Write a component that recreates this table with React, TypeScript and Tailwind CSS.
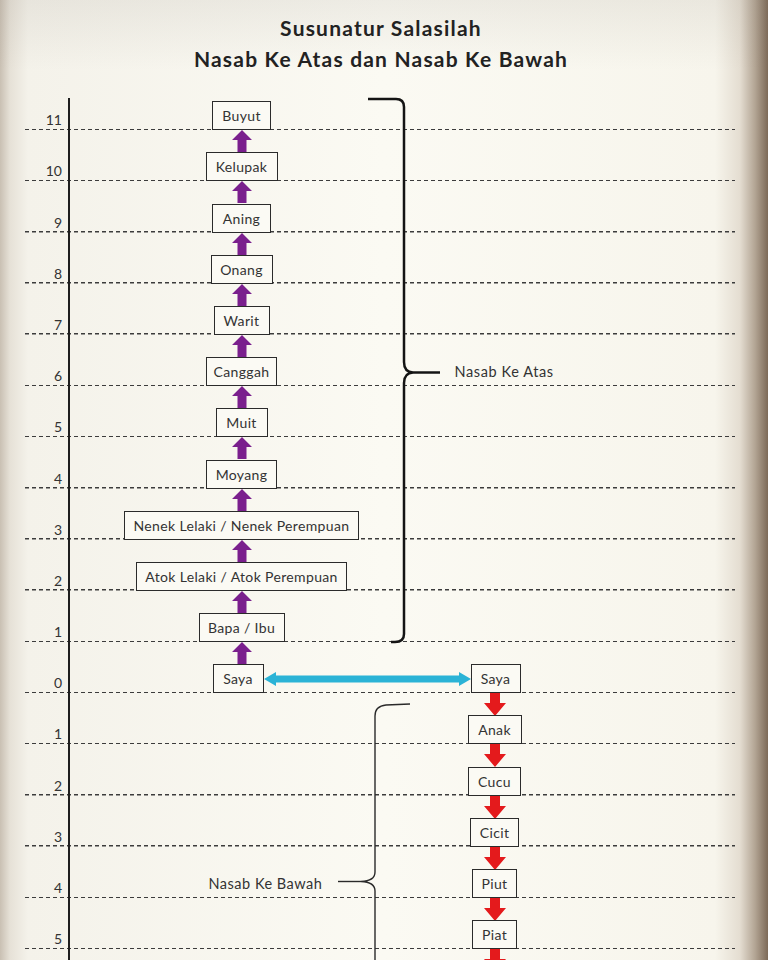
import React from 'react';

type Box = { label: string; w: string };

interface Row {
    n: string;
    left?: Box;
    right?: Box;
    up?: boolean;
    down?: boolean;
    noteRight?: string;
    noteLeft?: string;
    first?: boolean;
    self?: boolean;
}

const rows: Row[] = [
    { n: '11', left: { label: 'Buyut', w: 'w-[59px]' }, first: true },
    { n: '10', left: { label: 'Kelupak', w: 'w-[72px]' }, up: true },
    { n: '9', left: { label: 'Aning', w: 'w-[59px]' }, up: true },
    { n: '8', left: { label: 'Onang', w: 'w-[62px]' }, up: true },
    { n: '7', left: { label: 'Warit', w: 'w-[56px]' }, up: true },
    { n: '6', left: { label: 'Canggah', w: 'w-[71px]' }, up: true, noteRight: 'Nasab Ke Atas' },
    { n: '5', left: { label: 'Muit', w: 'w-[52px]' }, up: true },
    { n: '4', left: { label: 'Moyang', w: 'w-[71px]' }, up: true },
    { n: '3', left: { label: 'Nenek Lelaki / Nenek Perempuan', w: 'w-[235px]' }, up: true },
    { n: '2', left: { label: 'Atok Lelaki / Atok Perempuan', w: 'w-[211px]' }, up: true },
    { n: '1', left: { label: 'Bapa / Ibu', w: 'w-[86px]' }, up: true },
    { n: '0', up: true, self: true },
    { n: '1', right: { label: 'Anak', w: 'w-[54px]' }, down: true },
    { n: '2', right: { label: 'Cucu', w: 'w-[53px]' }, down: true },
    { n: '3', right: { label: 'Cicit', w: 'w-[49px]' }, down: true },
    { n: '4', right: { label: 'Piut', w: 'w-[45px]' }, down: true, noteLeft: 'Nasab Ke Bawah' },
    { n: '5', right: { label: 'Piat', w: 'w-[45px]' }, down: true },
];

function UpArrow() {
    return (
        <svg width="22" height="22" viewBox="0 0 22 22">
            <polygon points="11,0 21,10 15.5,10 15.5,22 6.5,22 6.5,10 1,10" fill="#7a1f8d" />
        </svg>
    );
}

function DownArrow() {
    return (
        <svg width="24" height="23" viewBox="0 0 24 23">
            <polygon points="7,0 17,0 17,10 23,10 12,23 1,10 7,10" fill="#e41a1c" />
        </svg>
    );
}

function BothArrow() {
    return (
        <svg width="207" height="16" viewBox="0 0 207 16">
            <polygon
                points="0,8 12,1 12,4.5 195,4.5 195,1 207,8 195,15 195,11.5 12,11.5 12,15"
                fill="#2bb3d6"
            />
        </svg>
    );
}

function NameBox({ box }: { box: Box }) {
    return (
        <div
            className={`${box.w} h-[29px] border-[1.5px] border-[#2b2b2b] bg-[#fbfaf4] flex items-center justify-center text-[14px] tracking-[0.35px] text-[#333] whitespace-nowrap`}
        >
            {box.label}
        </div>
    );
}

function ChartRow({ row }: { row: Row }) {
    return (
        <div className="ml-[25px] w-[710px] h-[51.2px] flex bg-[repeating-linear-gradient(90deg,#3c3c3c_0px,#3c3c3c_4px,transparent_4px,transparent_7px)] bg-[length:100%_1.5px] bg-no-repeat bg-bottom">
            {/* level number */}
            <div className="w-[43px] flex items-end justify-end pr-[6px] pb-[3px] text-[14px] leading-none text-[#333]">
                {row.n}
            </div>

            {/* axis */}
            <div className={`w-[1.5px] bg-[#1e1e1e] ${row.first ? 'mt-[19px]' : ''}`} />

            <div className="flex-1 flex flex-col">
                <div className="h-[22.2px] grid grid-cols-[344px_162px_1fr]">
                    <div className="flex justify-center">{row.up && <UpArrow />}</div>
                    <div className="flex justify-center">{row.down && <DownArrow />}</div>
                </div>

                {row.self ? (
                    <div className="h-[29px] flex items-center">
                        <div className="ml-[143px]">
                            <NameBox box={{ label: 'Saya', w: 'w-[51px]' }} />
                        </div>
                        <BothArrow />
                        <NameBox box={{ label: 'Saya', w: 'w-[50px]' }} />
                    </div>
                ) : (
                    <div className="h-[29px] grid grid-cols-[344px_162px_1fr]">
                        <div className="flex items-center justify-center">
                            {row.left && <NameBox box={row.left} />}
                            {row.noteLeft && (
                                <span className="mr-auto ml-[139px] text-[14.5px] tracking-[0.5px] text-[#333] whitespace-nowrap">
                                    {row.noteLeft}
                                </span>
                            )}
                        </div>
                        <div className="flex items-center justify-center">
                            {row.right && <NameBox box={row.right} />}
                            {row.noteRight && (
                                <span className="mr-auto ml-[41px] text-[14.5px] tracking-[0.6px] text-[#333] whitespace-nowrap">
                                    {row.noteRight}
                                </span>
                            )}
                        </div>
                    </div>
                )}
            </div>
        </div>
    );
}

export default function App() {
    return (
        <div
            className="relative w-[768px] h-[960px] overflow-hidden bg-[linear-gradient(180deg,rgba(120,110,100,0.10)_0px,transparent_70px),linear-gradient(90deg,#c9c0b3_0px,#e6e1d7_10px,#f4f2ea_28px,#fbfaf3_50%,#f7f5ec_715px,#e4ddd1_740px,#b3a594_755px,#7d6a58_768px)]"
            style={{ fontFamily: 'Lato, "Open Sans", sans-serif' }}
        >
            {/* title */}
            <div className="h-[79px] pt-[12px] pr-[6px] flex flex-col items-center text-[21px] tracking-[1.2px] font-bold text-[#222] leading-[31px]">
                <div>Susunatur Salasilah</div>
                <div>Nasab Ke Atas dan Nasab Ke Bawah</div>
            </div>

            {rows.map((row, i) => (
                <ChartRow key={i} row={row} />
            ))}

            {/* partial row cut by the bottom edge */}
            <div className="ml-[25px] w-[710px] h-[20px] flex">
                <div className="w-[43px]" />
                <div className="w-[1.5px] bg-[#1e1e1e]" />
                <div className="flex-1 grid grid-cols-[344px_162px_1fr]">
                    <div />
                    <div className="flex justify-center">
                        <DownArrow />
                    </div>
                </div>
            </div>

            {/* braces */}
            <svg className="absolute inset-0 pointer-events-none" width="768" height="960" viewBox="0 0 768 960">
                <path
                    d="M368 99 L396 99 Q404 99 404 107 L404 362 Q404 372 413 372.5 Q404 373 404 383 L404 634 Q404 642 395 642 L391 642"
                    fill="none"
                    stroke="#141414"
                    strokeWidth="2.5"
                />
                <path d="M413 372.5 L440 372.5" stroke="#141414" strokeWidth="2.5" />
                <path
                    d="M410 704 L386 705 Q375 706 375 716 L375 872 Q375 881 361 881.5 Q375 882 375 891 L375 960"
                    fill="none"
                    stroke="#2a2a2a"
                    strokeWidth="1.4"
                />
                <path d="M361 881.5 L338 881.5" stroke="#2a2a2a" strokeWidth="1.4" />
            </svg>
        </div>
    );
}
